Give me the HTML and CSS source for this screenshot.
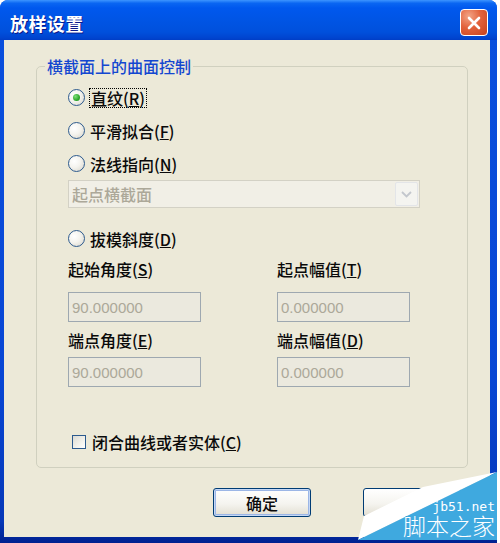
FILE: index.html
```html
<!DOCTYPE html>
<html lang="zh-CN">
<head>
<meta charset="utf-8">
<title>放样设置</title>
<link rel="stylesheet" href="styles.css">
</head>
<body>
<div class="window">
  <div class="titlebar">
    <span class="title">放样设置</span>
    <button class="close" aria-label="关闭">
      <svg width="16" height="16" viewBox="0 0 16 16"><path d="M3 3 L13 13 M13 3 L3 13" stroke="#fff" stroke-width="2.6" stroke-linecap="round" fill="none"/></svg>
    </button>
  </div>
  <div class="client">
    <fieldset class="group">
      <legend>横截面上的曲面控制</legend>
      <div class="options">
        <label class="opt"><span class="radio checked"></span><span class="focus">直纹(<u>R</u>)</span></label>
        <label class="opt"><span class="radio"></span><span>平滑拟合(<u>F</u>)</span></label>
        <label class="opt"><span class="radio"></span><span>法线指向(<u>N</u>)</span></label>
        <div class="select">
          <span class="select-text">起点横截面</span>
          <span class="select-btn"><svg width="11" height="7" viewBox="0 0 11 7"><path d="M1 1 L5.5 5.5 L10 1" stroke="#c3c7cd" stroke-width="1.8" fill="none"/></svg></span>
        </div>
        <label class="opt draft"><span class="radio"></span><span>拔模斜度(<u>D</u>)</span></label>
        <div class="fields">
          <div class="field"><div class="flabel">起始角度(<u>S</u>)</div><div class="input">90.000000</div></div>
          <div class="field"><div class="flabel">起点幅值(<u>T</u>)</div><div class="input">0.000000</div></div>
          <div class="field lower"><div class="flabel">端点角度(<u>E</u>)</div><div class="input">90.000000</div></div>
          <div class="field lower"><div class="flabel">端点幅值(<u>D</u>)</div><div class="input">0.000000</div></div>
        </div>
        <label class="check"><span class="box"></span><span>闭合曲线或者实体(<u>C</u>)</span></label>
      </div>
    </fieldset>
    <div class="buttons">
      <button class="btn default">确定</button>
      <button class="btn" aria-label="取消"></button>
    </div>
  </div>
  <svg class="watermark" width="139" height="68" viewBox="0 0 139 68">
    <polygon points="0,68 6,44 65,15 139,0" fill="#ffffff"/>
    <polygon points="0,68 139,0 139,68" fill="#3fa9df"/>
    <text x="137" y="39" text-anchor="end" class="wm-url">jb51.net</text>
    <text x="137" y="63" text-anchor="end" class="wm-name">脚本之家</text>
  </svg>
</div>
</body>
</html>
```

FILE: styles.css
```css
* { box-sizing: border-box; }
html, body { margin: 0; padding: 0; background: #ffffff; overflow: hidden; }
body {
  width: 500px;
  height: 543px;
  font-family: "Noto Sans CJK SC", "Noto Sans", sans-serif;
  font-size: 16px;
  font-weight: 500;
  color: #0a0a0a;
}
.window {
  position: relative;
  width: 497px;
  height: 543px;
  display: flex;
  flex-direction: column;
  border-radius: 8px 8px 0 0;
  overflow: hidden;
  background: linear-gradient(to bottom, #0a50de 0, #0846d4 70%, #0638b8 96%, #00208f 100%);
}
.titlebar {
  flex: none;
  height: 40px;
  display: flex;
  align-items: center;
  justify-content: space-between;
  padding: 5px 9px 0 10px;
  background: linear-gradient(to bottom, #3d95ff 0, #0a66f2 8%, #0058ee 20%, #0054e3 55%, #0050dc 80%, #0044cf 95%, #003dc6 100%);
}
.title {
  color: #ffffff;
  font-weight: 700;
  font-size: 18px;
  letter-spacing: 0.4px;
  text-shadow: 1px 1px 0 #0b1a8a;
}
.close {
  width: 28px;
  height: 27px;
  padding: 0;
  border: 1px solid #ffffff;
  border-radius: 4px;
  background: radial-gradient(circle at 30% 25%, #f3a486 0, #e2623c 45%, #c7411b 100%);
  display: flex;
  align-items: center;
  justify-content: center;
}
.client {
  flex: 1;
  margin: 0 7px 6px 4px;
  background: #ece9d8;
  display: flex;
  flex-direction: column;
}
.group {
  margin: 16px 22px 0 32px;
  padding: 5px 0 13px 8px;
  border: 1px solid #d0d0bf;
  border-radius: 5px;
  min-width: 0;
}
.group legend {
  padding: 0 2px;
  color: #1447d0;
  font-size: 16px;
  line-height: 20px;
}
.options {
  margin-left: 23px;
  display: flex;
  flex-direction: column;
}
.opt {
  height: 33px;
  display: flex;
  align-items: center;
  gap: 5px;
}
.radio {
  flex: none;
  width: 17px;
  height: 17px;
  border-radius: 50%;
  border: 1px solid #2c5a8e;
  background: radial-gradient(circle at 35% 35%, #ffffff 0, #f4f3ee 45%, #d6d3c8 100%);
  display: flex;
  align-items: center;
  justify-content: center;
}
.radio.checked::after {
  content: "";
  width: 7px;
  height: 7px;
  border-radius: 50%;
  background: radial-gradient(circle at 35% 35%, #7ee07a 0, #2ea82b 60%, #1d8a1c 100%);
}
.focus {
  outline: 1px dotted #000000;
  padding: 0 1px;
  line-height: 18px;
}
.select {
  width: 352px;
  height: 28px;
  border: 1px solid #d3d1c5;
  background: #f1efe6;
  display: flex;
  align-items: center;
  padding: 0 1px 0 3px;
  color: #aca899;
}
.select-text { flex: 1; }
.select-btn {
  width: 23px;
  height: 24px;
  border: 1px solid #e3e5e8;
  border-radius: 2px;
  background: #f4f4f0;
  display: flex;
  align-items: center;
  justify-content: center;
}
.draft { margin-top: 14px; }
.fields {
  margin-top: 2px;
  display: grid;
  grid-template-columns: 209px 133px;
}
.flabel {
  height: 24px;
  line-height: 24px;
}
.field.lower .flabel { margin-top: 6px; }
.input {
  margin-top: 11px;
  width: 133px;
  height: 30px;
  border: 1px solid #9ea8b0;
  background: #ebe9de;
  color: #aca899;
  font-family: "Liberation Sans", Arial, sans-serif;
  font-weight: 400;
  font-size: 15px;
  display: flex;
  align-items: center;
  padding-left: 3px;
}
.field.lower .input { margin-top: 5px; }
.check {
  margin-top: 43px;
  height: 24px;
  display: flex;
  align-items: center;
  gap: 6px;
  padding-left: 4px;
}
.box {
  flex: none;
  width: 14px;
  height: 14px;
  border: 1px solid #2c5a8e;
  background: linear-gradient(135deg, #dcdbd3 0, #f3f2ec 60%, #ffffff 100%);
}
.buttons {
  margin-top: 20px;
  display: flex;
  justify-content: flex-end;
  gap: 52px;
  padding-right: 29px;
}
.btn {
  width: 98px;
  height: 29px;
  padding: 0;
  border: 1px solid #003c74;
  border-radius: 3px;
  background: linear-gradient(to bottom, #ffffff 0, #f5f4ef 55%, #e6e3d8 90%, #d6d0c5 100%);
  font-family: "Noto Sans CJK SC", sans-serif;
  font-size: 16px;
  font-weight: 500;
  color: #0a0a0a;
}
.btn.default {
  box-shadow: inset 0 0 0 1px #c6d8f5, inset 0 0 0 2px #9cb6e6;
}
.watermark {
  position: absolute;
  right: 0;
  bottom: 3px;
  overflow: visible;
}
.wm-url {
  font-family: "DejaVu Sans Mono", monospace;
  font-size: 13px;
  font-weight: 400;
  fill: #ffffff;
}
.wm-name {
  font-family: "Noto Sans CJK SC", sans-serif;
  font-size: 23px;
  font-weight: 300;
  fill: #ffffff;
}
```
